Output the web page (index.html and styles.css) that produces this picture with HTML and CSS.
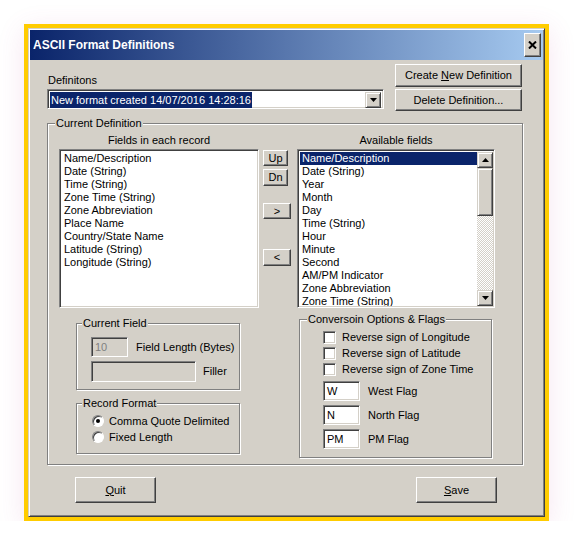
FILE: index.html
```html
<!DOCTYPE html>
<html lang="en">
<head>
    <meta charset="UTF-8">
    <title>ASCII Format Definitions</title>
    <link rel="stylesheet" href="styles.css">
</head>
<body>
    <div class="frame">
        <div class="window">
            <div class="titlebar">
                <span class="title">ASCII Format Definitions</span>
                <span class="close-btn">
                    <svg width="9" height="8" viewBox="0 0 9 8"><path d="M1 0.5 L8 7.5 M8 0.5 L1 7.5" stroke="#000" stroke-width="2"/></svg>
                </span>
            </div>

            <div class="dialog-body">
                <div class="top-row">
                    <div class="def-left">
                        <div class="def-label">Definitons</div>
                        <div class="combo">
                            <span class="combo-text"><span class="sel">New format created 14/07/2016 14:28:16</span></span>
                            <span class="combo-arrow">
                                <svg width="7" height="4" viewBox="0 0 7 4"><path d="M0 0 H7 L3.5 4 Z" fill="#000"/></svg>
                            </span>
                        </div>
                    </div>
                    <div class="def-buttons">
                        <button class="win-btn create-btn">Create <u>N</u>ew Definition</button>
                        <button class="win-btn delete-btn">Delete Definition...</button>
                    </div>
                </div>

                <div class="group current-def">
                    <span class="group-label cd-label">Current Definition</span>
                    <div class="cols">
                        <div class="col-left">
                            <div class="col-head">Fields in each record</div>
                            <div class="listbox left-list">
                                <div class="item">Name/Description</div>
                                <div class="item">Date (String)</div>
                                <div class="item">Time (String)</div>
                                <div class="item">Zone Time (String)</div>
                                <div class="item">Zone Abbreviation</div>
                                <div class="item">Place Name</div>
                                <div class="item">Country/State Name</div>
                                <div class="item">Latitude (String)</div>
                                <div class="item">Longitude (String)</div>
                            </div>
                        </div>

                        <div class="col-mid">
                            <button class="win-btn up-btn">Up</button>
                            <button class="win-btn dn-btn">Dn</button>
                            <button class="win-btn add-btn">&gt;</button>
                            <button class="win-btn remove-btn">&lt;</button>
                        </div>

                        <div class="col-right">
                            <div class="col-head">Available fields</div>
                            <div class="listbox right-list">
                                <div class="items">
                                    <div class="item selected">Name/Description</div>
                                    <div class="item">Date (String)</div>
                                    <div class="item">Year</div>
                                    <div class="item">Month</div>
                                    <div class="item">Day</div>
                                    <div class="item">Time (String)</div>
                                    <div class="item">Hour</div>
                                    <div class="item">Minute</div>
                                    <div class="item">Second</div>
                                    <div class="item">AM/PM Indicator</div>
                                    <div class="item">Zone Abbreviation</div>
                                    <div class="item">Zone Time (String)</div>
                                </div>
                                <div class="scrollbar">
                                    <span class="sb-btn">
                                        <svg width="7" height="4" viewBox="0 0 7 4"><path d="M0 4 H7 L3.5 0 Z" fill="#000"/></svg>
                                    </span>
                                    <span class="sb-thumb"></span>
                                    <span class="sb-track"></span>
                                    <span class="sb-btn">
                                        <svg width="7" height="4" viewBox="0 0 7 4"><path d="M0 0 H7 L3.5 4 Z" fill="#000"/></svg>
                                    </span>
                                </div>
                            </div>
                        </div>
                    </div>

                    <div class="lower">
                        <div class="lower-left">
                            <div class="group current-field">
                                <span class="group-label small-label">Current Field</span>
                                <div class="field-row">
                                    <span class="textbox disabled len-box">10</span>
                                    <span class="field-label len-label">Field Length (Bytes)</span>
                                </div>
                                <div class="field-row filler-row">
                                    <span class="textbox disabled filler-box"></span>
                                    <span class="field-label filler-label">Filler</span>
                                </div>
                            </div>

                            <div class="group record-format">
                                <span class="group-label small-label">Record Format</span>
                                <div class="option-row">
                                    <span class="radio checked"></span>
                                    <span class="option-label">Comma Quote Delimited</span>
                                </div>
                                <div class="option-row">
                                    <span class="radio"></span>
                                    <span class="option-label">Fixed Length</span>
                                </div>
                            </div>
                        </div>

                        <div class="group conv">
                            <span class="group-label conv-label">Conversoin Options &amp; Flags</span>
                            <div class="option-row">
                                <span class="checkbox"></span>
                                <span class="check-label">Reverse sign of Longitude</span>
                            </div>
                            <div class="option-row">
                                <span class="checkbox"></span>
                                <span class="check-label">Reverse sign of Latitude</span>
                            </div>
                            <div class="option-row">
                                <span class="checkbox"></span>
                                <span class="check-label">Reverse sign of Zone Time</span>
                            </div>
                            <div class="flags">
                                <div class="field-row">
                                    <span class="textbox flag-box">W</span>
                                    <span class="field-label">West Flag</span>
                                </div>
                                <div class="field-row">
                                    <span class="textbox flag-box">N</span>
                                    <span class="field-label">North Flag</span>
                                </div>
                                <div class="field-row">
                                    <span class="textbox flag-box">PM</span>
                                    <span class="field-label">PM Flag</span>
                                </div>
                            </div>
                        </div>
                    </div>
                </div>

                <div class="actions">
                    <button class="win-btn action-btn"><u>Q</u>uit</button>
                    <button class="win-btn action-btn"><u>S</u>ave</button>
                </div>
            </div>
        </div>
    </div>
</body>
</html>
```

FILE: styles.css
```css
* {
    box-sizing: border-box;
}

body {
    margin: 0;
    background-color: #fff;
    font-family: 'Liberation Sans', Arial, sans-serif;
    font-size: 11px;
    line-height: 13px;
    color: #000;
}

.frame {
    margin: 24px 0 0 24px;
    width: 525px;
    height: 497px;
    border: 4px solid #ffcc00;
    box-shadow: 0 6px 26px rgba(190, 70, 150, 0.14);
}

.window {
    height: 100%;
    background-color: #d4d0c8;
    border: 1px solid;
    border-color: #d4d0c8 #404040 #404040 #d4d0c8;
    padding: 1px;
    box-shadow: inset 1px 1px #fff, inset -1px -1px #808080;
}

/* barra de titulo */
.titlebar {
    height: 30px;
    display: flex;
    align-items: center;
    padding-left: 3px;
    background: linear-gradient(to right, #0a246a, #a6caf0);
    color: #fff;
}

.title {
    font-size: 12px;
    font-weight: bold;
}

.close-btn {
    margin-left: auto;
    margin-right: 2px;
    width: 17px;
    height: 24px;
    display: flex;
    align-items: center;
    justify-content: center;
    background-color: #d4d0c8;
    border: 1px solid;
    border-color: #fff #404040 #404040 #fff;
    box-shadow: inset -1px -1px #808080;
}

/* controles comunes */
.win-btn {
    display: block;
    padding: 0;
    font: inherit;
    color: #000;
    background-color: #d4d0c8;
    border: 1px solid;
    border-color: #fff #404040 #404040 #fff;
    box-shadow: inset -1px -1px #808080;
    text-align: center;
}

.listbox,
.textbox,
.combo {
    background-color: #fff;
    border: 1px solid;
    border-color: #808080 #fff #fff #808080;
    box-shadow: inset 1px 1px #404040, inset -1px -1px #d4d0c8;
}

.dialog-body {
    padding: 4px 0 0 17px;
}

.top-row {
    display: flex;
    align-items: flex-start;
}

.def-left {
    width: 337px;
}

.def-label {
    margin: 10px 0 2px 1px;
}

.combo {
    height: 20px;
    padding: 2px;
    display: flex;
}

.combo-text {
    flex: 1;
    padding-left: 0;
}

.combo-text .sel {
    display: inline-block;
    height: 16px;
    line-height: 16px;
    padding: 0 1px;
    background-color: #0a246a;
    color: #fff;
}

.combo-arrow {
    width: 16px;
    height: 16px;
    display: flex;
    align-items: center;
    justify-content: center;
    background-color: #d4d0c8;
    border: 1px solid;
    border-color: #d4d0c8 #404040 #404040 #d4d0c8;
    box-shadow: inset 1px 1px #fff, inset -1px -1px #808080;
}

.def-buttons {
    margin-left: 11px;
    width: 127px;
}

.create-btn {
    width: 127px;
    height: 23px;
}

.delete-btn {
    width: 127px;
    height: 22px;
    margin-top: 2px;
}

/* cuadros de grupo */
.group {
    position: relative;
    border: 1px solid #808080;
    box-shadow: inset 1px 1px #fff, 1px 1px #fff;
}

.group-label {
    position: absolute;
    top: -7px;
    padding: 0 1px;
    background-color: #d4d0c8;
}

.cd-label {
    left: 7px;
}

.small-label {
    left: 5px;
}

.conv-label {
    left: 7px;
}

.current-def {
    margin-top: 12px;
    width: 476px;
    height: 342px;
}

.cols {
    display: flex;
    margin: 10px 0 0 11px;
}

.col-head {
    text-align: center;
    margin-bottom: 2px;
}

.col-left {
    width: 200px;
}

.left-list {
    height: 159px;
    padding: 2px 0 0 4px;
}

.col-mid {
    margin-left: 4px;
    width: 28px;
    padding-top: 16px;
}

.up-btn {
    width: 25px;
    height: 16px;
}

.dn-btn {
    width: 25px;
    height: 17px;
    margin-top: 3px;
}

.add-btn {
    width: 28px;
    height: 16px;
    margin-top: 17px;
}

.remove-btn {
    width: 28px;
    height: 17px;
    margin-top: 30px;
}

.col-right {
    margin-left: 6px;
    width: 198px;
}

.right-list {
    height: 159px;
    padding: 2px 1px 1px 1px;
    display: flex;
    overflow: hidden;
}

.right-list .items {
    flex: 1;
    overflow: hidden;
    padding-left: 1px;
}

.right-list .item {
    padding-left: 2px;
}

.item.selected {
    background-color: #0a246a;
    color: #fff;
}

.scrollbar {
    width: 16px;
    display: flex;
    flex-direction: column;
}

.sb-btn,
.sb-thumb {
    background-color: #d4d0c8;
    border: 1px solid;
    border-color: #d4d0c8 #404040 #404040 #d4d0c8;
    box-shadow: inset 1px 1px #fff, inset -1px -1px #808080;
}

.sb-btn {
    height: 16px;
    display: flex;
    align-items: center;
    justify-content: center;
}

.sb-thumb {
    height: 48px;
}

.sb-track {
    flex: 1;
    background: repeating-conic-gradient(#fff 0 25%, #d4d0c8 0 50%) 0 0 / 2px 2px;
}

/* parte inferior */
.lower {
    display: flex;
    align-items: flex-start;
    margin-top: 11px;
}

.lower-left {
    margin-left: 28px;
    padding-top: 4px;
}

.current-field {
    width: 164px;
    height: 67px;
    padding: 13px 0 0 14px;
}

.field-row {
    display: flex;
    align-items: center;
}

.textbox {
    height: 20px;
    padding: 3px 0 0 3px;
}

.textbox.disabled {
    background-color: #d4d0c8;
    color: #808080;
}

.len-box {
    width: 37px;
}

.len-label {
    margin-left: 8px;
}

.filler-row {
    margin-top: 4px;
}

.filler-box {
    width: 105px;
    height: 21px;
}

.filler-label {
    margin-left: 7px;
}

.record-format {
    margin-top: 13px;
    width: 164px;
    height: 51px;
    padding: 9px 0 0 15px;
}

.option-row {
    display: flex;
    align-items: center;
    height: 16px;
}

.radio {
    position: relative;
    width: 12px;
    height: 12px;
    border-radius: 50%;
    background-color: #fff;
    border: 1px solid;
    border-color: #808080 #fff #fff #808080;
    box-shadow: inset 1px 1px #404040;
}

.radio.checked::after {
    content: "";
    position: absolute;
    left: 3px;
    top: 3px;
    width: 4px;
    height: 4px;
    border-radius: 50%;
    background-color: #000;
}

.option-label {
    margin-left: 5px;
}

.conv {
    margin-left: 59px;
    width: 193px;
    height: 139px;
    padding: 9px 0 0 23px;
}

.checkbox {
    width: 13px;
    height: 13px;
    background-color: #fff;
    border: 1px solid;
    border-color: #808080 #fff #fff #808080;
    box-shadow: inset 1px 1px #404040, inset -1px -1px #d4d0c8;
}

.check-label {
    margin-left: 6px;
}

.flags {
    margin-top: 4px;
}

.flags .field-row + .field-row {
    margin-top: 4px;
}

.flag-box {
    width: 37px;
}

.flags .field-label {
    margin-left: 8px;
}

.actions {
    display: flex;
    justify-content: space-between;
    width: 476px;
    margin-top: 12px;
    padding: 0 26px 0 28px;
}

.action-btn {
    width: 81px;
    height: 26px;
}
```
